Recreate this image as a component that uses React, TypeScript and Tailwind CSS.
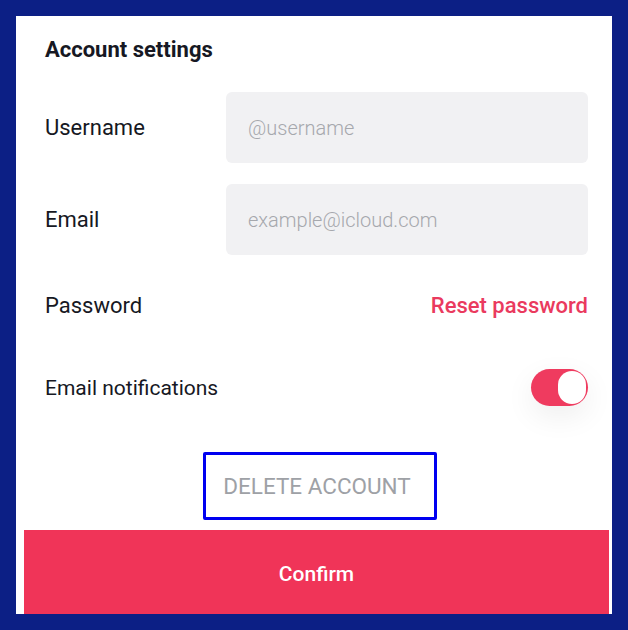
import { useState } from "react";

const font = { fontFamily: "Roboto, 'Liberation Sans', sans-serif" };

const Field = ({ label, placeholder }: { label: string; placeholder: string }) => (
  <div className="flex items-center h-[71px]">
    <span className="w-[181px] text-[22px] text-[#161823]">{label}</span>
    <input
      placeholder={placeholder}
      className="flex-1 h-full rounded-[6px] bg-[#f1f1f3] px-[22px] text-[20px] font-light text-[#161823] placeholder:text-[#a6a8ad] outline-none"
    />
  </div>
);

export default function App() {
  const [notify, setNotify] = useState(true);

  return (
    <div className="w-[628px] h-[630px] bg-[#0c1f85] p-4" style={font}>
      <div className="h-[598px] bg-white flex flex-col">
        {/* settings body */}
        <div className="pl-[29px] pr-[24px]">
          <div className="h-[66px] flex items-center">
            <h1 className="text-[22px] font-bold text-[#161823]">Account settings</h1>
          </div>

          <div className="mt-[10px] flex flex-col gap-[21px]">
            <Field label="Username" placeholder="@username" />
            <Field label="Email" placeholder="example@icloud.com" />
          </div>

          <div className="h-[100px] flex items-center justify-between">
            <span className="text-[22px] text-[#161823]">Password</span>
            <button className="text-[22px] font-medium text-[#ea3a5e]">Reset password</button>
          </div>

          <div className="h-[64px] flex items-center justify-between">
            <span className="text-[21px] text-[#161823] pt-[3px]">Email notifications</span>
            <button
              onClick={() => setNotify(!notify)}
              className={`w-[57px] h-[37px] rounded-full flex items-center px-[2px] shadow-[0_10px_30px_rgba(0,0,0,0.07)] ${
                notify ? "bg-[#ef3b5f] justify-end" : "bg-[#d9d9dc] justify-start"
              }`}
            >
              <span className="w-[28px] h-[33px] rounded-full bg-white" />
            </button>
          </div>
        </div>

        <div className="mt-[33px] flex justify-center pl-[11px]">
          <button className="w-[234px] h-[68px] pr-[5px] pt-[2px] border-[3px] border-[#0000f0] rounded-[2px] text-[22.5px] text-[#9ea1a6] uppercase">
            Delete account
          </button>
        </div>

        <button className="mt-[10px] ml-[8px] mr-[3px] h-[84px] pt-[6px] bg-[#f03458] text-white text-[21px] font-medium">
          Confirm
        </button>
      </div>
    </div>
  );
}
